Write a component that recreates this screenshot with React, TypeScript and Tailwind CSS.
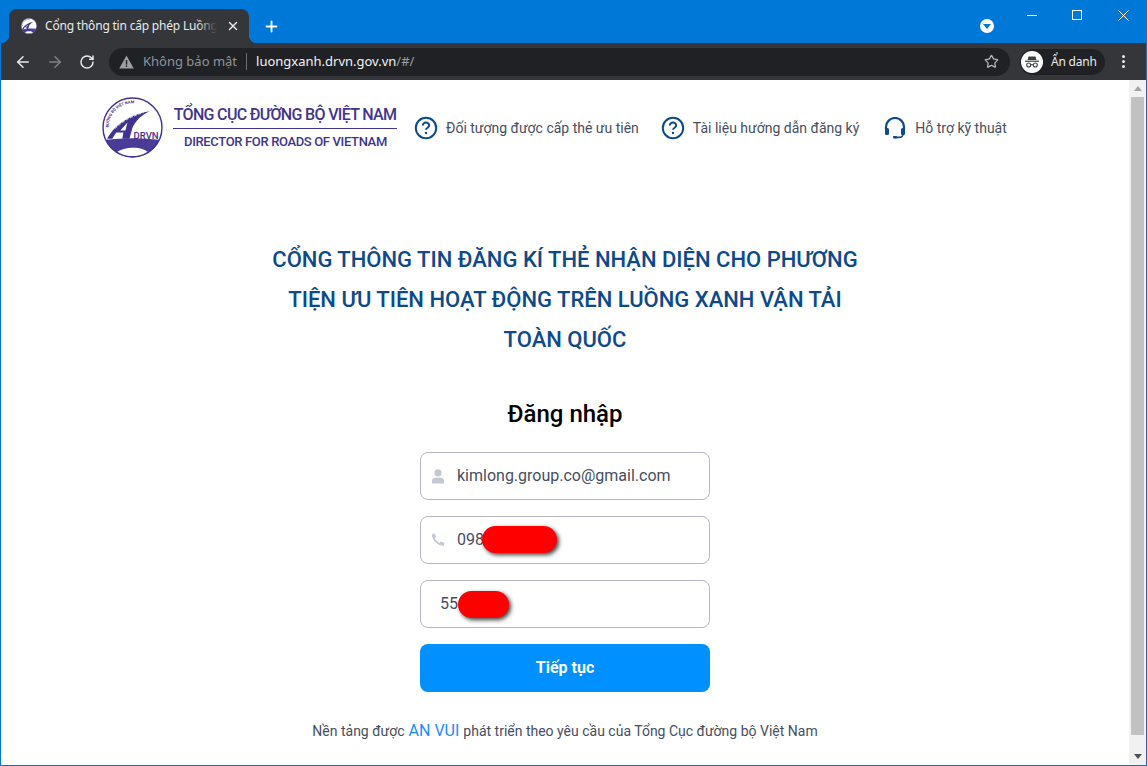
import { ArrowLeft, ArrowRight, RotateCw, Star, X, Plus } from "lucide-react";

const NAV_LINKS = [
  { label: "Đối tượng được cấp thẻ ưu tiên", icon: "help" },
  { label: "Tài liệu hướng dẫn đăng ký", icon: "help" },
  { label: "Hỗ trợ kỹ thuật", icon: "headset" },
];

function HelpIcon() {
  return (
    <svg width="24" height="24" viewBox="0 0 24 24" fill="none" className="shrink-0">
      <circle cx="12" cy="12" r="10.2" stroke="#0d4a8a" strokeWidth="2" />
      <path d="M8.8 9.6a3.2 3.2 0 0 1 6.4 0c0 2-3.2 2.2-3.2 4.2" stroke="#0d4a8a" strokeWidth="2" />
      <circle cx="12" cy="17" r="1.2" fill="#0d4a8a" />
    </svg>
  );
}

function HeadsetIcon() {
  return (
    <svg width="22" height="22" viewBox="0 0 22 22" fill="none" className="shrink-0">
      <path d="M2 13V10a9 9 0 0 1 18 0v3" stroke="#0d4a8a" strokeWidth="2.2" />
      <rect x="1" y="11" width="4" height="7" rx="1.5" fill="#0d4a8a" />
      <rect x="17" y="11" width="4" height="7" rx="1.5" fill="#0d4a8a" />
      <path d="M19 17c0 2.5-2 3.4-4.5 3.4H11" stroke="#0d4a8a" strokeWidth="1.6" />
      <rect x="9" y="19" width="4" height="2.6" rx="1" fill="#0d4a8a" />
    </svg>
  );
}

function Logo({ size, arcId }: { size: number; arcId: string }) {
  return (
    <svg width={size} height={size} viewBox="0 0 60 60" className="shrink-0">
      <circle cx="30" cy="30" r="29" fill="#fff" />
      {/* bridge band along the bottom of the ring */}
      <path d="M3.5 42Q30 39 56.5 42A29 29 0 0 1 3.5 42Z" fill="#4a3b96" />
      <path d="M14 55C18 51.500 24 50 31 50s11 1.500 15 5C41 57.500 36 58 30 58S19 57.500 14 55Z" fill="#fff" />
      {/* the road that makes the letter A */}
      <path d="M5 41C12 29 24 18 47 14 38 18 33 24 30 30L27 41H20L21 35H14L10 41Z" fill="#3f3290" />
      <path d="M18 33 25 25 23 33Z" fill="#fff" />
      <path d="M13 31C19 25 28 19 41 15.500" fill="none" stroke="#fff" strokeWidth="0.7" strokeDasharray="3 1.5" />
      <text x="31" y="41" fontSize="9.4" fontFamily="Roboto, sans-serif" fontWeight="500" fill="#3f3290">DRVN</text>
      <path id={arcId} d="M6.500 30A23.500 23.500 0 0 1 39 8" fill="none" />
      <text fontSize="3.9" fontFamily="Roboto, sans-serif" fontWeight="700" fill="#3f3290">
        <textPath href={"#" + arcId}>ĐƯỜNG BỘ VIỆT NAM</textPath>
      </text>
      <circle cx="30" cy="30" r="29" fill="none" stroke="#3f3290" strokeWidth="1.4" />
    </svg>
  );
}

function IncognitoIcon() {
  return (
    <svg width="22" height="22" viewBox="0 0 22 22" className="shrink-0">
      <circle cx="11" cy="11" r="11" fill="#fff" />
      <path d="M7.5 5.5h7l1 3.6H6.5Z" fill="#3c4043" />
      <rect x="4" y="9.6" width="14" height="1.2" fill="#3c4043" />
      <circle cx="7.7" cy="14" r="2" fill="none" stroke="#3c4043" strokeWidth="1.1" />
      <circle cx="14.3" cy="14" r="2" fill="none" stroke="#3c4043" strokeWidth="1.1" />
      <path d="M9.7 13.7h2.6" stroke="#3c4043" strokeWidth="1" />
    </svg>
  );
}

function WarningIcon() {
  return (
    <svg width="15" height="14" viewBox="0 0 15 14" className="shrink-0">
      <path d="M7.5 0.5 14.8 13.500H0.2Z" fill="#9aa0a6" />
      <rect x="6.8" y="5" width="1.4" height="4.6" fill="#202124" />
      <rect x="6.8" y="10.4" width="1.4" height="1.5" fill="#202124" />
    </svg>
  );
}

function UserIcon() {
  return (
    <svg width="14" height="15" viewBox="0 0 14 15" fill="#c3c8d4">
      <circle cx="7" cy="3.8" r="3.6" />
      <path d="M1 14.500V12c0-2.400 2-3.400 6-3.400s6 1 6 3.400v2.500Z" />
    </svg>
  );
}

function PhoneIcon() {
  return (
    <svg width="14" height="14" viewBox="0 0 14 14" fill="#c3c8d4">
      <path d="M1 1 3.6.4 5.2 3.9 3.8 5.200C4.600 7.200 6.600 9.200 8.600 10l1.400-1.500 3.400 1.600-.5 2.700C7 13.400.6 7 1 1Z" />
    </svg>
  );
}

function TitleBar() {
  return (
    <div className="flex h-[43px] shrink-0 items-end pl-[8px] text-white">
      <div className="relative flex h-[34px] w-[240px] items-center rounded-t-[8px] bg-[#35363a] pl-[12px] pr-[9px]">
        <span className="absolute bottom-0 left-[-8px] h-[8px] w-[8px] bg-[radial-gradient(circle_at_0_0,transparent_8px,#35363a_8.5px)]" />
        <span className="absolute bottom-0 right-[-8px] h-[8px] w-[8px] bg-[radial-gradient(circle_at_100%_0,transparent_8px,#35363a_8.5px)]" />
        <Logo size={16} arcId="tab-arc" />
        <span className="relative ml-[8px] w-[172px] overflow-hidden whitespace-nowrap font-['Noto_Sans',sans-serif] text-[12px] tracking-[-0.2px] text-[#e8eaed]">
          Cổng thông tin cấp phép Luồng xanh
          <span className="absolute inset-y-0 right-0 w-[20px] bg-gradient-to-r from-transparent to-[#35363a]" />
        </span>
        <X size={14} strokeWidth={2.4} className="ml-auto text-[#e8eaed]" />
      </div>
      <Plus size={17} strokeWidth={2.6} className="mb-[8px] ml-[14px]" />
      <div className="ml-auto flex h-full items-start">
        <div className="mr-[15px] mt-[19px] flex h-[14px] w-[14px] items-center justify-center rounded-full bg-white">
          <span className="mt-[1px] h-0 w-0 border-x-[4px] border-t-[5px] border-x-transparent border-t-[#0078d7]" />
        </div>
        <div className="flex h-[30px] w-[45px] items-center justify-center">
          <span className="h-px w-[10px] bg-white" />
        </div>
        <div className="flex h-[30px] w-[46px] items-center justify-center">
          <span className="h-[10px] w-[10px] border border-white" />
        </div>
        <div className="flex h-[30px] w-[46px] items-center justify-center">
          <svg width="11" height="11" viewBox="0 0 11 11" stroke="#fff" strokeWidth="1">
            <path d="M0.5 0.5 10.500 10.500M10.500 0.5 0.5 10.500" />
          </svg>
        </div>
      </div>
    </div>
  );
}

function Toolbar() {
  return (
    <div className="flex h-[37px] shrink-0 items-center bg-[#35363a] font-['Noto_Sans',sans-serif]">
      <ArrowLeft size={18} strokeWidth={2} className="ml-[13px] text-[#e8eaed]" />
      <ArrowRight size={18} strokeWidth={2} className="ml-[14px] text-[#7f8184]" />
      <RotateCw size={16} strokeWidth={2.2} className="ml-[15px] text-[#e8eaed]" />
      <div className="ml-[14px] flex h-[28px] w-[901px] items-center rounded-full bg-[#202124] pl-[10px] pr-[10px] text-[13px]">
        <WarningIcon />
        <span className="ml-[9px] text-[#8f9499]">Không bảo mật</span>
        <span className="ml-[9px] mr-[9px] h-[17px] w-px bg-[#6b6e72]" />
        <span className="text-[#f1f3f4]">luongxanh.drvn.gov.vn</span>
        <span className="text-[#9aa0a6]">/#/</span>
        <Star size={15} strokeWidth={2} className="ml-auto mr-[1px] text-[#b5b8bb]" />
      </div>
      <div className="ml-[10px] flex h-[26px] w-[85px] items-center rounded-full bg-[#202124] pl-[1px] text-[12px] tracking-[-0.2px] text-[#e8eaed]">
        <IncognitoIcon />
        <span className="ml-[8px]">Ẩn danh</span>
      </div>
      <div className="ml-[17px] flex flex-col gap-[2px]">
        <span className="h-[3px] w-[3px] rounded-full bg-[#e8eaed]" />
        <span className="h-[3px] w-[3px] rounded-full bg-[#e8eaed]" />
        <span className="h-[3px] w-[3px] rounded-full bg-[#e8eaed]" />
      </div>
    </div>
  );
}

function Field({ icon, value, blob }: { icon?: React.ReactNode; value: string; blob?: string }) {
  return (
    <div className="relative flex h-[48px] w-[290px] items-center rounded-[8px] border border-[#b5b5c3] bg-white text-[16px] text-[#464e5f]">
      {icon ? <span className="flex w-[36px] pl-[10px]">{icon}</span> : <span className="w-[19px]" />}
      <span>{value}</span>
      {blob && <span className={blob} />}
    </div>
  );
}

export default function App() {
  return (
    <div className="flex h-[766px] w-[1147px] flex-col overflow-hidden bg-[#0078d7] pb-px pl-px pr-px font-['Roboto',sans-serif]">
      <TitleBar />
      <Toolbar />
      <div className="flex min-h-0 flex-1 bg-white">
        <main className="flex w-[1129px] flex-col items-center">
          <header className="flex w-full items-center pl-[101px] pt-[17px]">
            <Logo size={61} arcId="header-arc" />
            <div className="mb-[2px] ml-[10px] flex w-[224px] flex-col text-[#41348f]">
              <span className="whitespace-nowrap border-b border-[#41348f] pb-[1px] text-center text-[16px] font-medium leading-[24px] tracking-[-0.67px]">
                TỔNG CỤC ĐƯỜNG BỘ VIỆT NAM
              </span>
              <span className="whitespace-nowrap pt-[4px] pl-[1px] text-center text-[13px] font-medium leading-[18px] tracking-[-0.35px]">
                DIRECTOR FOR ROADS OF VIETNAM
              </span>
            </div>
            <nav className="ml-[17px] flex items-center">
              {NAV_LINKS.map((link, i) => (
                <a
                  key={i}
                  className={
                    "flex items-center text-[14px] text-[#464e5f] " +
                    (i === 0 ? "" : i === 1 ? "ml-[22px]" : "ml-[25px]")
                  }
                >
                  {link.icon === "help" ? <HelpIcon /> : <HeadsetIcon />}
                  <span className={"mt-[2px] " + (link.icon === "help" ? "ml-[8px]" : "ml-[9px]")}>{link.label}</span>
                </a>
              ))}
            </nav>
          </header>

          <h1 className="mt-[82px] w-[600px] text-center text-[22px] font-medium leading-[40px] text-[#0d4a8a]">
            CỔNG THÔNG TIN ĐĂNG KÍ THẺ NHẬN DIỆN CHO PHƯƠNG TIỆN ƯU TIÊN HOẠT ĐỘNG TRÊN LUỒNG XANH VẬN TẢI TOÀN QUỐC
          </h1>

          <h2 className="mt-[38px] text-[24px] font-medium leading-[32px] text-black">Đăng nhập</h2>

          <div className="mt-[22px] flex flex-col gap-[16px]">
            <Field icon={<UserIcon />} value="kimlong.group.co@gmail.com" />
            <Field
              icon={<PhoneIcon />}
              value="098"
              blob="absolute left-[61px] top-[9px] h-[27px] w-[75px] rounded-full bg-[#ff0000] shadow-[2px_2px_4px_rgba(0,0,0,0.75)]"
            />
            <Field
              value="55"
              blob="absolute left-[37px] top-[10px] h-[27px] w-[51px] rounded-full bg-[#ff0000] shadow-[2px_2px_4px_rgba(0,0,0,0.75)]"
            />
            <button className="flex h-[48px] w-[290px] items-center justify-center rounded-[8px] bg-[#0090ff] text-[16px] font-bold text-white">
              Tiếp tục
            </button>
          </div>

          <p className="mt-[27px] flex items-baseline text-[14px] text-[#464e5f]">
            Nền tảng được
            <span className="mx-[4px] text-[16px] text-[#1a8cff]">AN VUI</span>
            phát triển theo yêu cầu của Tổng Cục đường bộ Việt Nam
          </p>
        </main>

        <aside className="flex w-[17px] flex-col items-center bg-[#f1f1f1]">
          <span className="mt-[6px] h-0 w-0 border-x-[4px] border-b-[5px] border-x-transparent border-b-[#a3a3a3]" />
          <span className="mt-[6px] h-[638px] w-[13px] bg-[#c1c1c1]" />
          <span className="mt-[19px] h-0 w-0 border-x-[4px] border-t-[5px] border-x-transparent border-t-[#505050]" />
        </aside>
      </div>
    </div>
  );
}
